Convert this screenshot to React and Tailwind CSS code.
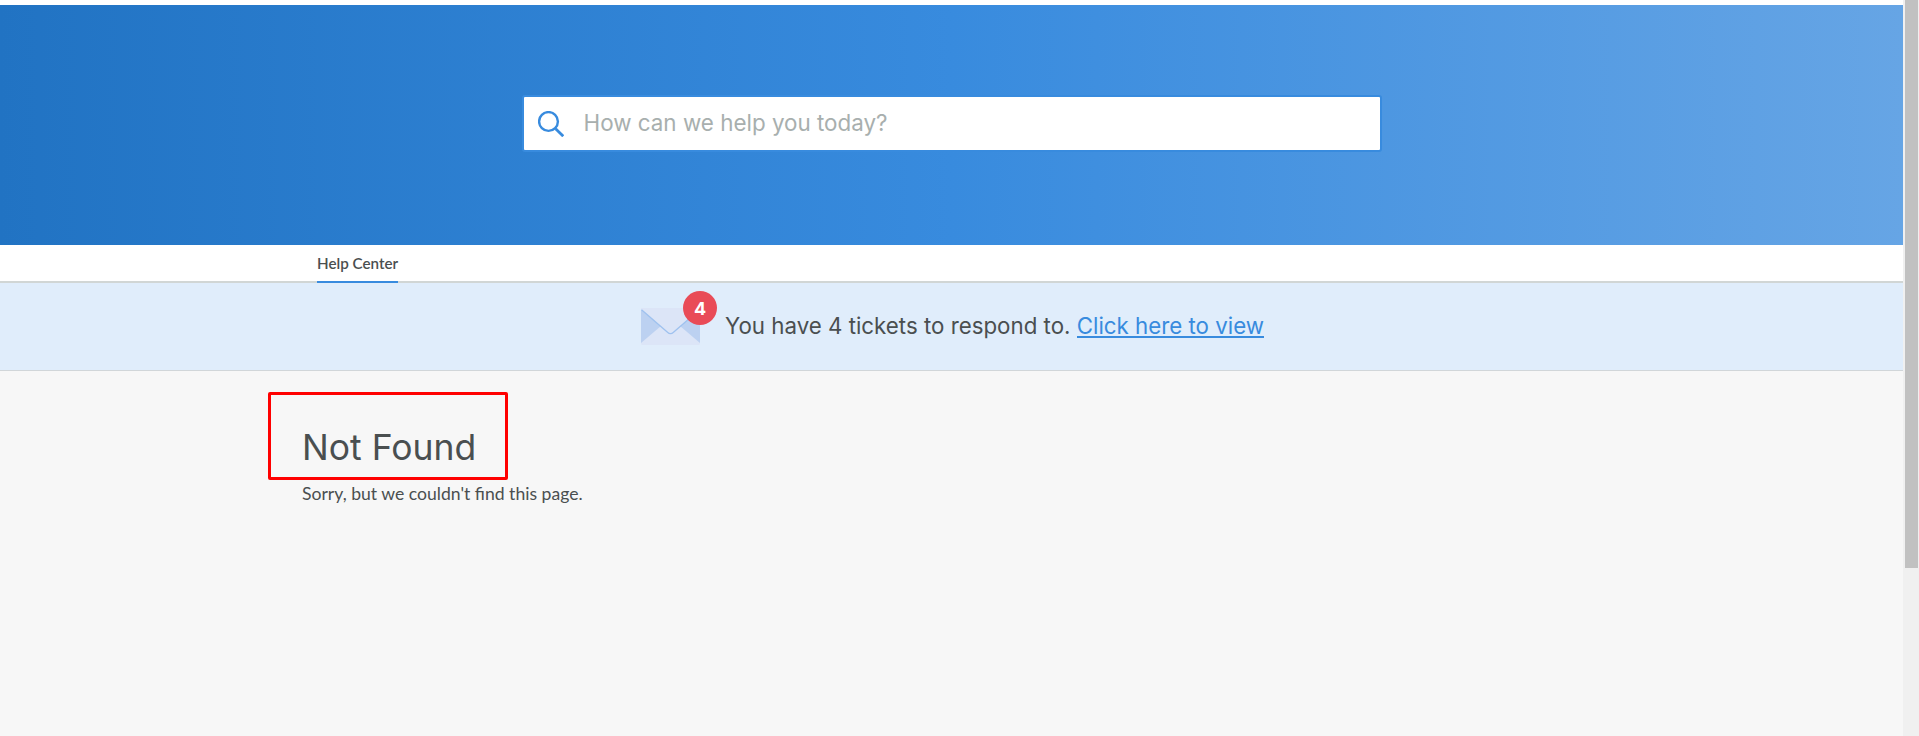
function SearchIcon() {
  return (
    <svg className="ml-[14px] h-[26px] w-[26px] shrink-0" viewBox="0 0 26 26" fill="none" stroke="#388bde" strokeWidth="2.4">
      <circle cx="10.5" cy="10.5" r="9.4" />
      <path d="M17.6 17.8 L25.2 25.2" strokeWidth="2.8" />
    </svg>
  );
}

function Envelope() {
  return (
    <svg className="block h-[37px] w-[59px]" viewBox="0 0 59 37">
      <rect width="59" height="37" rx="1.5" fill="#dce5f7" />
      <path d="M0 1.5 L20 18 L0 35 Z" fill="#bcd1f1" />
      <path d="M59 1.5 L39 18 L59 35 Z" fill="#bcd1f1" />
      <path d="M0 1.5 L26.5 24.2 Q29.5 27 32.5 24.2 L59 1.5 V0 H0 Z" fill="#dce5f7" />
      <path d="M0.5 1.8 L26.5 24.2 Q29.5 27 32.5 24.2 L58.5 1.8" fill="none" stroke="#9fc2ef" strokeWidth="1.3" />
    </svg>
  );
}

export default function App() {
  return (
    <div className="flex h-[736px] w-full overflow-hidden bg-[#f7f7f7] font-['Lato',sans-serif] text-[#4a4f50]">
      <div className="flex min-w-0 flex-1 flex-col">
        <header className="border-t-[5px] border-white">
          <div className="flex h-[240px] items-start justify-center bg-[linear-gradient(90deg,#2173c3_0%,#388bde_50%,#66a5e5_100%)] pt-[90px]">
            <label className="flex h-[57px] w-[860px] items-center rounded-[3px] border-2 border-[#388bde] bg-white">
              <SearchIcon />
              <input
                className="mb-[2px] ml-[20px] min-w-0 flex-1 bg-transparent font-['Inter',sans-serif] text-[22.4px] outline-none placeholder:text-[#a8afae]"
                placeholder="How can we help you today?"
              />
            </label>
          </div>
        </header>
        <nav className="flex h-[38px] border-b-2 border-[#d1d6d5] bg-white pl-[317px]">
          <a className="h-[38px] w-[81px] whitespace-nowrap border-b-2 border-[#388bde] pt-[7px] text-[15.2px] leading-[22px] font-semibold">Help Center</a>
        </nav>
        <section className="flex h-[88px] border-b border-[#d1d6d9] bg-[#e0edfb] pl-[641px]">
          <div className="relative mt-[25px] h-[37px] w-[59px]">
            <Envelope />
            <span className="absolute -top-[17px] left-[42px] flex h-[34px] w-[34px] items-center justify-center rounded-full bg-[#e94b57] font-['Inter',sans-serif] text-[18px] font-bold text-white">4</span>
          </div>
          <p className="mt-[28px] ml-[25px] whitespace-nowrap font-['Inter',sans-serif] text-[22.3px] leading-[30px]">
            <span>You have 4 tickets to respond to. </span>
            <a className="inline-block h-[27px] border-b-2 border-[#388bde] text-[#388bde]">Click here to view</a>
          </p>
        </section>
        <main className="pt-[21px] pl-[268px]">
          <div className="h-[88px] w-[240px] rounded-[2px] border-[3px] border-[#ff0000] pt-[31px] pl-[31px]">
            <h1 className="whitespace-nowrap font-['Inter',sans-serif] text-[35.5px] leading-[44px]">Not Found</h1>
          </div>
          <p className="mt-[1px] pl-[34px] text-[17.6px] leading-[26px]">Sorry, but we couldn't find this page.</p>
        </main>
      </div>
      <div className="w-[16px] bg-[#f0f0f0] pl-[2px]">
        <div className="h-[568px] w-[13px] bg-[#c1c1c1]" />
      </div>
    </div>
  );
}
